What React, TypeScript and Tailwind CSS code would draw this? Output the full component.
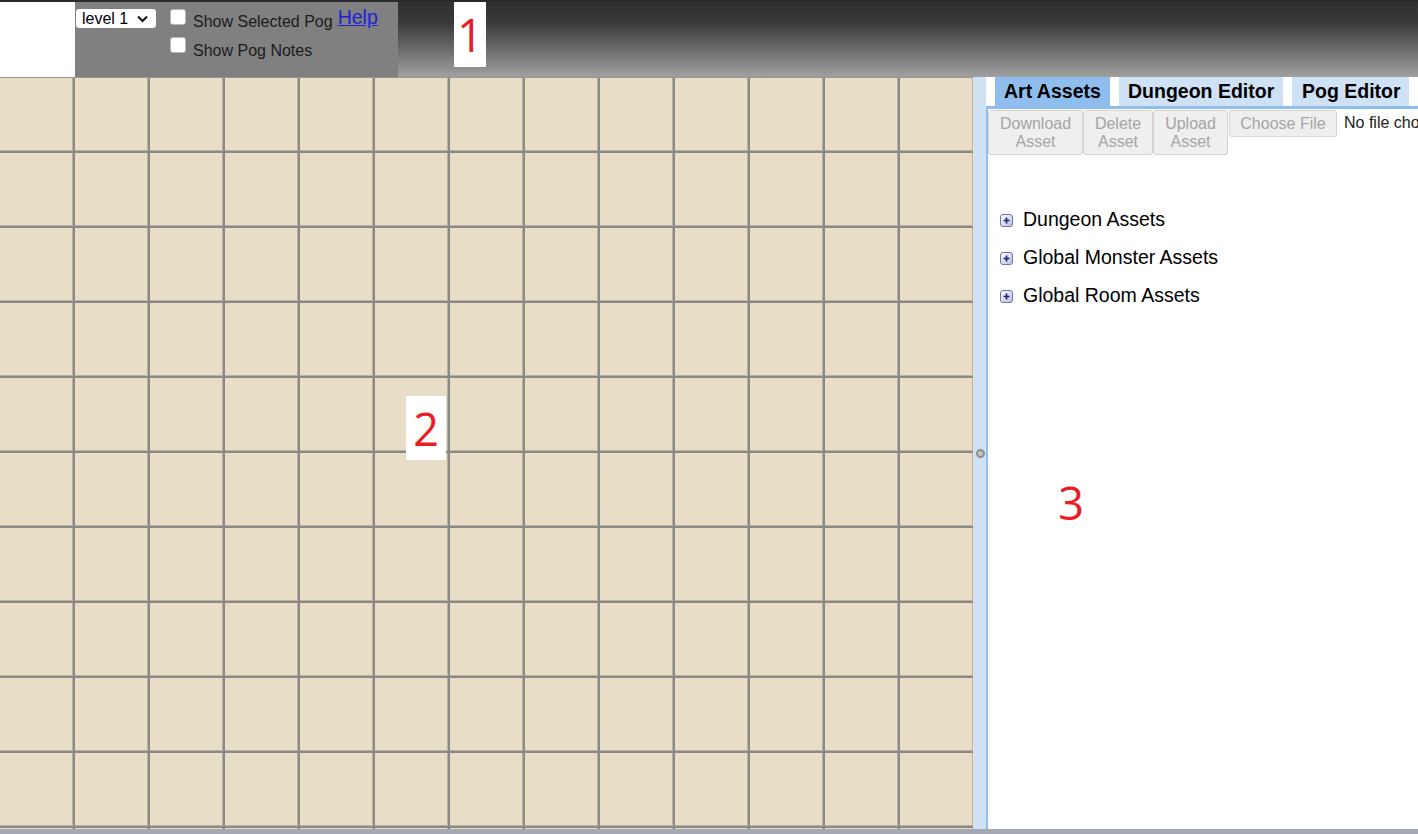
import React from 'react'

const FONT = "font-['Liberation_Sans',Arial,sans-serif]"

function Checkbox() {
  return <div className="h-[16px] w-[16px] shrink-0 rounded-[3px] border border-[#b9b9b9] bg-white" />
}

function PlusIcon() {
  return (
    <svg width="13" height="13" viewBox="0 0 13 13" className="shrink-0">
      <defs>
        <linearGradient id="pg" x1="0" y1="0" x2="1" y2="1">
          <stop offset="0" stopColor="#ffffff" />
          <stop offset="1" stopColor="#b9bce3" />
        </linearGradient>
      </defs>
      <rect x="0.5" y="0.5" width="12" height="12" rx="2.5" fill="url(#pg)" stroke="#6f73ad" />
      <path d="M3.5 6.5h6M6.5 3.5v6" stroke="#22247a" strokeWidth="1.7" />
    </svg>
  )
}

function Annotation({ n, boxed = true, className }: { n: string; boxed?: boolean; className: string }) {
  return (
    <div className={`absolute flex items-center justify-center ${boxed ? 'bg-white' : ''} ${className}`}>
      <span className="font-['Open_Sans',sans-serif] text-[45px] leading-none text-[#ec1c24]">{n}</span>
    </div>
  )
}

const ROWS = 11
const COLS = 13

export default function App() {
  const cells = Array.from({ length: ROWS * COLS })

  return (
    <div className={`relative flex h-[834px] w-[1418px] flex-col overflow-hidden bg-white ${FONT}`}>
      {/* header */}
      <div className="flex h-[77px] shrink-0 border-t-2 border-[#2a2a2a]">
        <div className="w-[75px] bg-white" />
        <div className="flex w-[323px] items-start bg-[#808080] pl-[1px] pt-[7px]">
          <div className="flex h-[19px] w-[80px] shrink-0 items-center justify-between rounded-[3px] bg-white pl-[6px] pr-[8px] text-[16px] leading-none text-black">
            <span>level 1</span>
            <svg width="11" height="8" viewBox="0 0 11 8">
              <path d="M1 1.5l4.5 4.5 4.5-4.5" fill="none" stroke="#111" strokeWidth="2" />
            </svg>
          </div>
          <div className="ml-[14px] flex flex-col">
            <div className="flex items-start">
              <Checkbox />
              <span className="ml-[7px] mt-[4px] whitespace-nowrap text-[16px] leading-[18px] text-[#1b1b1b]">
                Show Selected Pog
              </span>
              <a href="#" className="-mt-[3px] ml-[5px] text-[19.5px] leading-[22px] text-[#1f1fd8] underline">
                Help
              </a>
            </div>
            <div className="mt-[6px] flex items-start">
              <Checkbox />
              <span className="ml-[7px] mt-[5px] text-[16px] leading-[18px] text-[#1b1b1b]">Show Pog Notes</span>
            </div>
          </div>
        </div>
        <div className="flex-1 bg-[linear-gradient(to_bottom,#2f2f2f_0%,#3a3a3a_28%,#a0a0a0_100%)]" />
      </div>

      {/* main */}
      <div className="flex h-[752px] shrink-0">
        <div className="w-[973px] shrink-0 overflow-hidden border-t border-[#9a968f] bg-[#e8dec8]">
          <div className="grid grid-cols-[repeat(13,75px)] auto-rows-[75px]">
            {cells.map((_, i) => (
              <div
                key={i}
                className="border-b-2 border-r-2 border-[#8c8883] bg-[#e8dec8] shadow-[inset_-1px_-1px_0_#b9b1a1]"
              />
            ))}
          </div>
        </div>

        <div className="flex w-[13px] shrink-0 items-center justify-center border-l border-[#e9e4d8] bg-[#cfe2f5]">
          <div className="h-[9px] w-[9px] rounded-full border-2 border-[#8e8e8e] bg-[#c4c4c4]" />
        </div>

        <div className="flex min-w-0 flex-1 flex-col">
          <div className="flex h-[29px] shrink-0 gap-[9px] bg-white pl-[9px] text-[19.5px] font-bold leading-[29px] text-black">
            <div className="w-[115px] shrink-0 whitespace-nowrap bg-[#8fbdee] pl-[9px]">Art Assets</div>
            <div className="w-[164px] shrink-0 whitespace-nowrap bg-[#cfe2f5] pl-[9px]">Dungeon Editor</div>
            <div className="w-[117px] shrink-0 whitespace-nowrap bg-[#cfe2f5] pl-[10px]">Pog Editor</div>
          </div>
          <div className="flex-1 overflow-hidden border-l-2 border-t-[3px] border-[#8fbdee] bg-white pt-[1px]">
            <div className="flex items-start whitespace-nowrap text-[16px] leading-[18px]">
              <button
                type="button"
                disabled
                className="h-[45px] w-[95px] shrink-0 rounded-[3px] border border-[#d4d4d4] bg-[#efefef] text-[#a5a5a5]"
              >
                Download
                <br />
                Asset
              </button>
              <button
                type="button"
                disabled
                className="h-[45px] w-[70px] shrink-0 rounded-[3px] border border-[#d4d4d4] bg-[#efefef] text-[#a5a5a5]"
              >
                Delete
                <br />
                Asset
              </button>
              <button
                type="button"
                disabled
                className="h-[45px] w-[75px] shrink-0 rounded-[3px] border border-[#d4d4d4] bg-[#efefef] text-[#a5a5a5]"
              >
                Upload
                <br />
                Asset
              </button>
              <button
                type="button"
                disabled
                className="ml-[1px] h-[27px] w-[108px] shrink-0 rounded-[3px] border border-[#d4d4d4] bg-[#efefef] text-[#a5a5a5]"
              >
                Choose File
              </button>
              <span className="ml-[7px] mt-[4px] shrink-0 text-[#222]">No file chosen</span>
            </div>

            <div className="mt-[46px] flex flex-col pl-[12px] text-[19.5px] text-black">
              {['Dungeon Assets', 'Global Monster Assets', 'Global Room Assets'].map((label) => (
                <div key={label} className="flex h-[38px] items-center gap-[10px]">
                  <PlusIcon />
                  <span>{label}</span>
                </div>
              ))}
            </div>
          </div>
        </div>
      </div>

      <div className="h-[5px] shrink-0 bg-[#a4a8b2]" />

      <Annotation n="1" className="left-[454px] top-[2px] h-[65px] w-[32px]" />
      <Annotation n="2" className="left-[406px] top-[396px] h-[64px] w-[40px]" />
      <Annotation n="3" boxed={false} className="left-[1051px] top-[470px] h-[64px] w-[40px]" />
    </div>
  )
}
